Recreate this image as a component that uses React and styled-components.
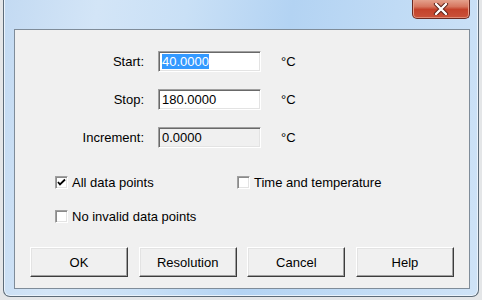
import styled, { createGlobalStyle } from "styled-components";

const GlobalStyle = createGlobalStyle`
  html, body {
    margin: 0;
    padding: 0;
    background: #e4e6e8;
    overflow: hidden;
  }
  body {
    font-family: "Liberation Sans", Arial, sans-serif;
    font-size: 13px;
    color: #000;
  }
`;

const Desktop = styled.div`
  width: 482px;
  height: 300px;
  padding-left: 3px;
  box-sizing: border-box;
`;

const Window = styled.div`
  position: relative;
  width: 476px;
  height: 297px;
  box-sizing: border-box;
  padding: 29px 8px 7px 10px;
  border: 1px solid #5d6b78;
  border-top: none;
  border-radius: 0 0 7px 7px;
  background: linear-gradient(
    100deg,
    #c3daf2 0%,
    #d3e5f7 18%,
    #c9e0f6 35%,
    #b3d3f3 55%,
    #c0dbf5 75%,
    #cfe3f7 100%
  );
  box-shadow: inset 1px 0 0 #eaf3fc, inset -1px 0 0 #eaf3fc, inset 0 -1px 0 #eaf3fc;
`;

const CloseButton = styled.div`
  position: absolute;
  top: -1px;
  right: 8px;
  width: 58px;
  height: 20px;
  box-sizing: border-box;
  border: 1px solid #6b2a22;
  border-top: none;
  border-radius: 0 0 5px 5px;
  background: linear-gradient(#e6a793 0%, #d6765f 40%, #c4422b 55%, #c9523a 100%);
  box-shadow: inset 0 -1px 0 #e08a74, inset 1px 0 0 #e9a08c, inset -1px 0 0 #e9a08c;
  display: flex;
  align-items: center;
  justify-content: center;
`;

const Client = styled.div`
  height: 100%;
  box-sizing: border-box;
  border: 1px solid #7f8c99;
  background: #f0f0f0;
  padding: 21px 0 0 0;
`;

const Fields = styled.div`
  display: grid;
  grid-template-columns: 129px 103px auto;
  grid-auto-rows: 21px;
  column-gap: 14px;
  row-gap: 17px;
  align-items: center;
`;

const Label = styled.label`
  text-align: right;
`;

const Unit = styled.span`
  padding-left: 6px;
`;

const Field = styled.div`
  height: 21px;
  box-sizing: border-box;
  border-top: 1px solid #a0a0a0;
  border-left: 1px solid #a0a0a0;
  border-bottom: 1px solid #ffffff;
  border-right: 1px solid #ffffff;
  box-shadow: inset 1px 1px 0 #696969, inset -1px -1px 0 #e3e3e3;
  background: ${({ disabled }) => (disabled ? "#f0f0f0" : "#ffffff")};
  padding: 2px 3px 0 3px;
  line-height: 16px;
  white-space: nowrap;
`;

const Selected = styled.span`
  background: #3399ff;
  color: #fff;
`;

const Options = styled.div`
  margin-top: 26px;
  padding-left: 40px;
  display: grid;
  grid-template-columns: 182px auto;
  grid-auto-rows: 16px;
  row-gap: 18px;
  align-items: center;
`;

const Option = styled.div`
  display: flex;
  align-items: center;
  gap: 4px;
`;

const Box = styled.span`
  width: 13px;
  height: 13px;
  box-sizing: border-box;
  border-top: 1px solid #a0a0a0;
  border-left: 1px solid #a0a0a0;
  border-bottom: 1px solid #ffffff;
  border-right: 1px solid #ffffff;
  box-shadow: inset 1px 1px 0 #8a8a8a, inset -1px -1px 0 #e3e3e3;
  background: #fff;
  display: flex;
  align-items: center;
  justify-content: center;
`;

const Buttons = styled.div`
  margin-top: 23px;
  padding-left: 15px;
  display: flex;
  gap: 10.67px;
`;

const Button = styled.button`
  width: 98px;
  height: 30px;
  box-sizing: border-box;
  font: inherit;
  color: #000;
  background: #f0f0f0;
  border-top: 1px solid #ffffff;
  border-left: 1px solid #ffffff;
  border-bottom: 1px solid #3c3c3c;
  border-right: 1px solid #3c3c3c;
  box-shadow: inset -1px -1px 0 #a0a0a0, inset 1px 1px 0 #e3e3e3;
  padding: 0;
`;

const Check = ({ checked }) => (
  <Box>
    {checked && (
      <svg width="9" height="9" viewBox="0 0 9 9">
        <path d="M1 4 L3 6.5 L8 1.5" fill="none" stroke="#000" strokeWidth="1.8" />
      </svg>
    )}
  </Box>
);

export default function App() {
  return (
    <Desktop>
      <GlobalStyle />
      <Window>
        <CloseButton>
          <svg width="16" height="12" viewBox="0 0 16 12">
            <path d="M3 1 L13 11 M13 1 L3 11" stroke="#5a2018" strokeWidth="4.2" strokeLinecap="round" />
            <path d="M3 1 L13 11 M13 1 L3 11" stroke="#ffffff" strokeWidth="2.4" strokeLinecap="round" />
          </svg>
        </CloseButton>
        <Client>
          <Fields>
            <Label>Start:</Label>
            <Field>
              <Selected>40.0000</Selected>
            </Field>
            <Unit>°C</Unit>

            <Label>Stop:</Label>
            <Field>180.0000</Field>
            <Unit>°C</Unit>

            <Label>Increment:</Label>
            <Field disabled>0.0000</Field>
            <Unit>°C</Unit>
          </Fields>

          <Options>
            <Option>
              <Check checked />
              All data points
            </Option>
            <Option>
              <Check />
              Time and temperature
            </Option>
            <Option>
              <Check />
              No invalid data points
            </Option>
          </Options>

          <Buttons>
            <Button>OK</Button>
            <Button>Resolution</Button>
            <Button>Cancel</Button>
            <Button>Help</Button>
          </Buttons>
        </Client>
      </Window>
    </Desktop>
  );
}
